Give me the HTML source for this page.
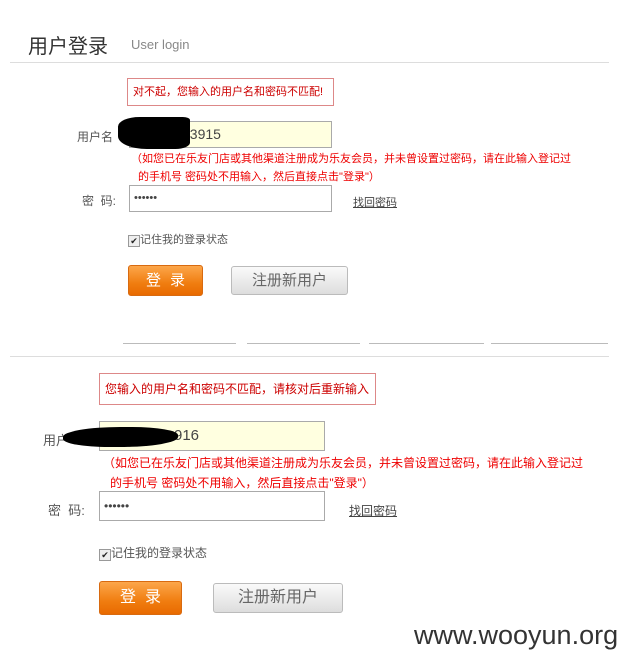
<!DOCTYPE html><html><head><meta charset="utf-8"><style>
body{margin:0;width:619px;height:669px;background:#fff;position:relative;overflow:hidden;font-family:"Liberation Sans","Noto Sans CJK SC",sans-serif;color:#555}
.a{position:absolute;white-space:nowrap}
.err{position:absolute;border:1px solid #d88;background:#fff;color:#c00;font-size:11px;box-sizing:border-box;padding-left:5px}
.inp{position:absolute;border:1px solid #aaa;box-sizing:border-box;font-size:14px;color:#444;padding-left:4px}
.red{position:absolute;color:#e00;font-size:11px;white-space:nowrap}
.btn1{position:absolute;background:linear-gradient(#fca64a,#f07d10 60%,#e86a00);border:1px solid #d86a10;border-radius:3px;color:#fff;font-size:15px;text-align:center;box-sizing:border-box;letter-spacing:9px}
.btn2{position:absolute;background:linear-gradient(#fafafa,#ddd);border:1px solid #bbb;border-radius:3px;color:#666;font-size:15px;text-align:center;box-sizing:border-box}
.hr{position:absolute;height:1px;background:#ddd}
.blob{position:absolute;background:#000;border-radius:40%}
.cb{display:inline-block;width:10px;height:10px;border:1px solid #999;background:#eee;font-size:9px;line-height:10px;text-align:center;color:#222;vertical-align:-1px}
</style></head><body>
<div class="a" style="left:28px;top:30px;font-size:20px;color:#333">用户登录</div>
<div class="a" style="left:131px;top:37px;font-size:13px;color:#888">User login</div>
<div class="hr" style="left:10px;top:62px;width:599px"></div>

<div class="err" style="left:127px;top:78px;width:207px;height:28px;line-height:26px">对不起，您输入的用户名和密码不匹配!</div>
<div class="a" style="left:77px;top:128px;font-size:12px">用户名</div>
<div class="inp" style="left:129px;top:121px;width:203px;height:27px;background:#ffffe0;line-height:25px;padding-left:52px">23915</div>
<div class="blob" style="left:118px;top:117px;width:72px;height:32px;border-radius:30% 10% 20% 40%"></div>
<div class="red" style="left:131px;top:150px">（如您已在乐友门店或其他渠道注册成为乐友会员，并未曾设置过密码，请在此输入登记过</div>
<div class="red" style="left:138px;top:168px">的手机号 密码处不用输入，然后直接点击"登录"）</div>
<div class="a" style="left:82px;top:192px;font-size:12px">密&nbsp; 码:</div>
<div class="inp" style="left:129px;top:185px;width:203px;height:27px;line-height:25px;font-size:11px">••••••</div>
<div class="a" style="left:353px;top:194px;font-size:11px;text-decoration:underline;color:#444">找回密码</div>
<div class="a" style="left:128px;top:231px;font-size:11px"><span class="cb">✔</span>记住我的登录状态</div>
<div class="btn1" style="left:128px;top:265px;width:75px;height:31px;line-height:29px;padding-left:9px">登录</div>
<div class="btn2" style="left:231px;top:266px;width:117px;height:29px;line-height:27px">注册新用户</div>

<div class="hr" style="left:123px;top:343px;width:113px;background:#bbb"></div>
<div class="hr" style="left:247px;top:343px;width:113px;background:#bbb"></div>
<div class="hr" style="left:369px;top:343px;width:115px;background:#bbb"></div>
<div class="hr" style="left:491px;top:343px;width:117px;background:#bbb"></div>
<div class="hr" style="left:10px;top:356px;width:599px"></div>

<div class="err" style="left:99px;top:373px;width:277px;height:32px;line-height:30px;font-size:12px">您输入的用户名和密码不匹配，请核对后重新输入</div>
<div class="a" style="left:43px;top:430px;font-size:13px">用户</div>
<div class="inp" style="left:99px;top:421px;width:226px;height:30px;background:#ffffe0;line-height:28px;padding-left:74px;font-size:15px">916</div>
<div class="blob" style="left:63px;top:427px;width:115px;height:20px;border-radius:50% 40% 50% 40%"></div>
<div class="red" style="left:103px;top:454px;font-size:12px">（如您已在乐友门店或其他渠道注册成为乐友会员，并未曾设置过密码，请在此输入登记过</div>
<div class="red" style="left:110px;top:474px;font-size:12px">的手机号 密码处不用输入，然后直接点击"登录"）</div>
<div class="a" style="left:48px;top:500px;font-size:13px">密&nbsp; 码:</div>
<div class="inp" style="left:99px;top:491px;width:226px;height:30px;line-height:28px;font-size:12px">••••••</div>
<div class="a" style="left:349px;top:502px;font-size:12px;text-decoration:underline;color:#444">找回密码</div>
<div class="a" style="left:99px;top:544px;font-size:12px"><span class="cb">✔</span>记住我的登录状态</div>
<div class="btn1" style="left:99px;top:581px;width:83px;height:34px;line-height:32px;padding-left:9px;font-size:16px">登录</div>
<div class="btn2" style="left:213px;top:583px;width:130px;height:30px;line-height:28px;font-size:16px">注册新用户</div>

<div class="a" style="left:414px;top:620px;font-size:27px;color:#333">www.wooyun.org</div>
</body></html>
